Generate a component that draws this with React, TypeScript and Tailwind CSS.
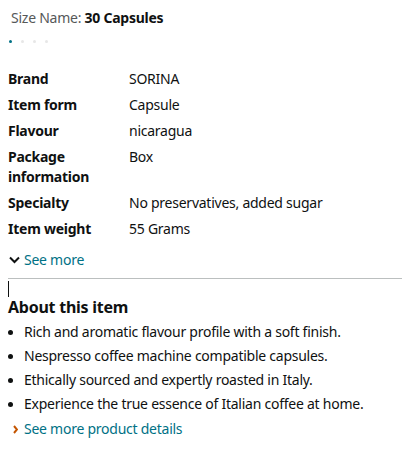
import React from "react";

const specs: { label: string; value: string }[] = [
  { label: "Brand", value: "SORINA" },
  { label: "Item form", value: "Capsule" },
  { label: "Flavour", value: "nicaragua" },
  { label: "Package information", value: "Box" },
  { label: "Specialty", value: "No preservatives, added sugar" },
  { label: "Item weight", value: "55 Grams" },
];

const bullets = [
  "Rich and aromatic flavour profile with a soft finish.",
  "Nespresso coffee machine compatible capsules.",
  "Ethically sourced and expertly roasted in Italy.",
  "Experience the true essence of Italian coffee at home.",
];

export default function App() {
  return (
    <div
      className="w-[402px] h-[458px] bg-white text-[#0f1111] text-[14px] leading-[20px] tracking-[-0.25px] overflow-hidden"
      style={{ fontFamily: '"Noto Sans", "Open Sans", Arial, sans-serif' }}
    >
      <div className="pl-[11px] pt-[8px] text-[#565959]">
        Size Name: <span className="font-bold text-[#0f1111]">30 Capsules</span>
      </div>

      <div className="flex items-center gap-[9px] pl-[9px] mt-[12px] h-[3px]">
        <span className="w-[3px] h-[3px] rounded-full bg-[#007185]" />
        <span className="w-[3px] h-[3px] rounded-full bg-[#e7e7e7]" />
        <span className="w-[3px] h-[3px] rounded-full bg-[#e7e7e7]" />
        <span className="w-[3px] h-[3px] rounded-full bg-[#e7e7e7]" />
      </div>

      <table className="ml-[8px] mt-[23px] border-collapse">
        <tbody>
          {specs.map((s) => (
            <tr key={s.label}>
              <td className="w-[121px] pr-[10px] py-[3px] align-top font-bold">{s.label}</td>
              <td className="py-[3px] align-top">{s.value}</td>
            </tr>
          ))}
        </tbody>
      </table>

      <div className="flex items-center gap-[4px] pl-[9px] mt-[8px] text-[#007185]">
        <svg width="11" height="8" viewBox="0 0 11 8" className="text-[#0f1111]">
          <path d="M1 1.5 L5.5 6 L10 1.5" stroke="currentColor" strokeWidth="2" fill="none" />
        </svg>
        <span>See more</span>
      </div>

      <div className="ml-[8px] mt-[8px] border-t border-[#bbbfbf]" />

      <div className="ml-[8px] mt-[2px] w-px h-[16px] bg-[#0f1111]" />

      <h2 className="pl-[8px] mt-px text-[16px] leading-[18px] font-bold">About this item</h2>

      <ul className="pl-[8px] mt-[4px]">
        {bullets.map((b) => (
          <li key={b} className="flex items-start gap-[11px] py-[2px]">
            <span className="mt-[8px] w-[5px] h-[5px] rounded-full bg-[#0f1111] shrink-0" />
            <span>{b}</span>
          </li>
        ))}
      </ul>

      <div className="flex items-center gap-[6px] pl-[13px] mt-[3px] text-[#007185]">
        <svg width="5" height="9" viewBox="0 0 5 9">
          <path d="M1 1 L4 4.5 L1 8" stroke="#c45500" strokeWidth="2" fill="none" />
        </svg>
        <span>See more product details</span>
      </div>
    </div>
  );
}
